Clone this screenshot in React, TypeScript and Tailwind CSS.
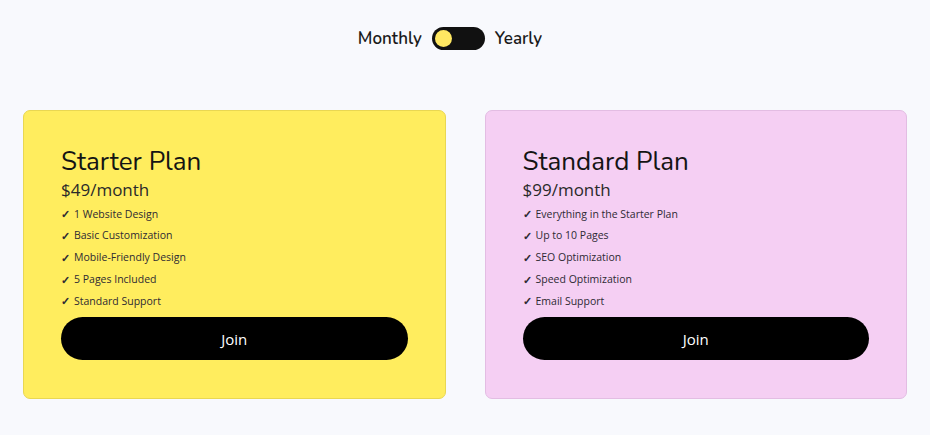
import { useState } from "react";

const plans = [
  {
    name: "Starter Plan",
    price: "$49/month",
    bg: "bg-[#ffed5e] border-[#e9d752]",
    features: [
      "1 Website Design",
      "Basic Customization",
      "Mobile-Friendly Design",
      "5 Pages Included",
      "Standard Support",
    ],
  },
  {
    name: "Standard Plan",
    price: "$99/month",
    bg: "bg-[#f5cff3] border-[#e3bde3]",
    features: [
      "Everything in the Starter Plan",
      "Up to 10 Pages",
      "SEO Optimization",
      "Speed Optimization",
      "Email Support",
    ],
  },
];

export default function App() {
  const [yearly, setYearly] = useState(false);

  return (
    <div className="min-h-[435px] w-full bg-[#f8f9fd] px-[23px] pt-[26px] font-['Open_Sans',sans-serif]">
      <div className="mr-[30px] flex items-center justify-center gap-[10px] font-['Nunito','Lato',sans-serif] text-[17px] font-semibold text-[#1b1b1b]">
        <span>Monthly</span>
        <button
          onClick={() => setYearly(!yearly)}
          className={`flex h-[23px] w-[53px] items-center rounded-full bg-[#111111] px-[3px] ${
            yearly ? "justify-end" : "justify-start"
          }`}
        >
          <span className="h-[17px] w-[17px] rounded-full bg-[#ffe862]" />
        </button>
        <span>Yearly</span>
      </div>

      <div className="mt-[58px] grid grid-cols-2 gap-[39px]">
        {plans.map((p) => (
          <PlanCard key={p.name} {...p} />
        ))}
      </div>
    </div>
  );
}

function PlanCard({
  name,
  price,
  bg,
  features,
}: {
  name: string;
  price: string;
  bg: string;
  features: string[];
}) {
  return (
    <div className={`h-[289px] rounded-[7px] border px-[37px] pt-[34px] ${bg}`}>
      <h2 className="font-['Nunito','Lato',sans-serif] text-[26px] leading-[34px] text-[#141414]">
        {name}
      </h2>
      <div className="mt-[-1px] text-[17px] leading-[24px] text-[#2a2a2a]">
        {price}
      </div>
      <ul className="mt-[2px] text-[10.5px] text-[#2e2a33]">
        {features.map((f) => (
          <li key={f} className="flex h-[21.8px] items-center">
            <span className="w-[13px] text-[11px] font-bold">✓</span>
            {f}
          </li>
        ))}
      </ul>
      <button className="mt-[5px] h-[43px] w-full rounded-full bg-black text-[15px] text-white">
        Join
      </button>
    </div>
  );
}
